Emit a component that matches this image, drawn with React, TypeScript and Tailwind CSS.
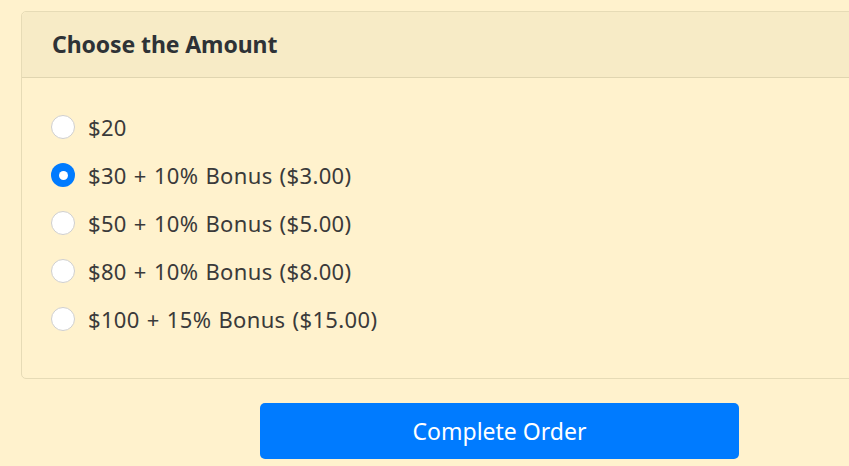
import React, { useState } from "react";

const options = [
  "$20",
  "$30 + 10% Bonus ($3.00)",
  "$50 + 10% Bonus ($5.00)",
  "$80 + 10% Bonus ($8.00)",
  "$100 + 15% Bonus ($15.00)",
];

export default function App() {
  const [sel, setSel] = useState(1);
  return (
    <div
      className="w-[849px] h-[466px] overflow-hidden bg-[#fff2cd] text-[#343a40]"
      style={{ fontFamily: '"Noto Sans", "Open Sans", sans-serif' }}
    >
      <div className="pt-[11px] pl-[21px]">
        <div className="w-[860px] border border-[#e6dbb6] rounded-[5px] bg-[#fff2cd]">
          <div className="h-[66px] flex items-center pl-[30px] bg-[#f7ebc6] border-b border-[#e0d5b0] rounded-t-[5px]">
            <span className="text-[23px] font-bold text-[#2e3236] tracking-[-0.1px]">Choose the Amount</span>
          </div>
          <div className="pl-[29px] pt-[25px] pb-[35px] flex flex-col">
            {options.map((o, i) => (
              <label key={i} className="h-[48px] flex items-center cursor-pointer" onClick={() => setSel(i)}>
                {sel === i ? (
                  <span className="w-[24px] h-[24px] rounded-full bg-[#007bff] flex items-center justify-center">
                    <span className="w-[9px] h-[9px] rounded-full bg-white" />
                  </span>
                ) : (
                  <span className="w-[24px] h-[24px] rounded-full bg-white border border-[#cfcfcf]" />
                )}
                <span className="ml-[13px] text-[22px] text-[#3a3a3a] tracking-[0.35px] [word-spacing:1px]">{o}</span>
              </label>
            ))}
          </div>
        </div>
      </div>
      <div className="pt-[24px] pl-[260px]">
        <button className="w-[479px] h-[56px] rounded-[5px] bg-[#007bff] text-white text-[23px]">
          Complete Order
        </button>
      </div>
    </div>
  );
}
